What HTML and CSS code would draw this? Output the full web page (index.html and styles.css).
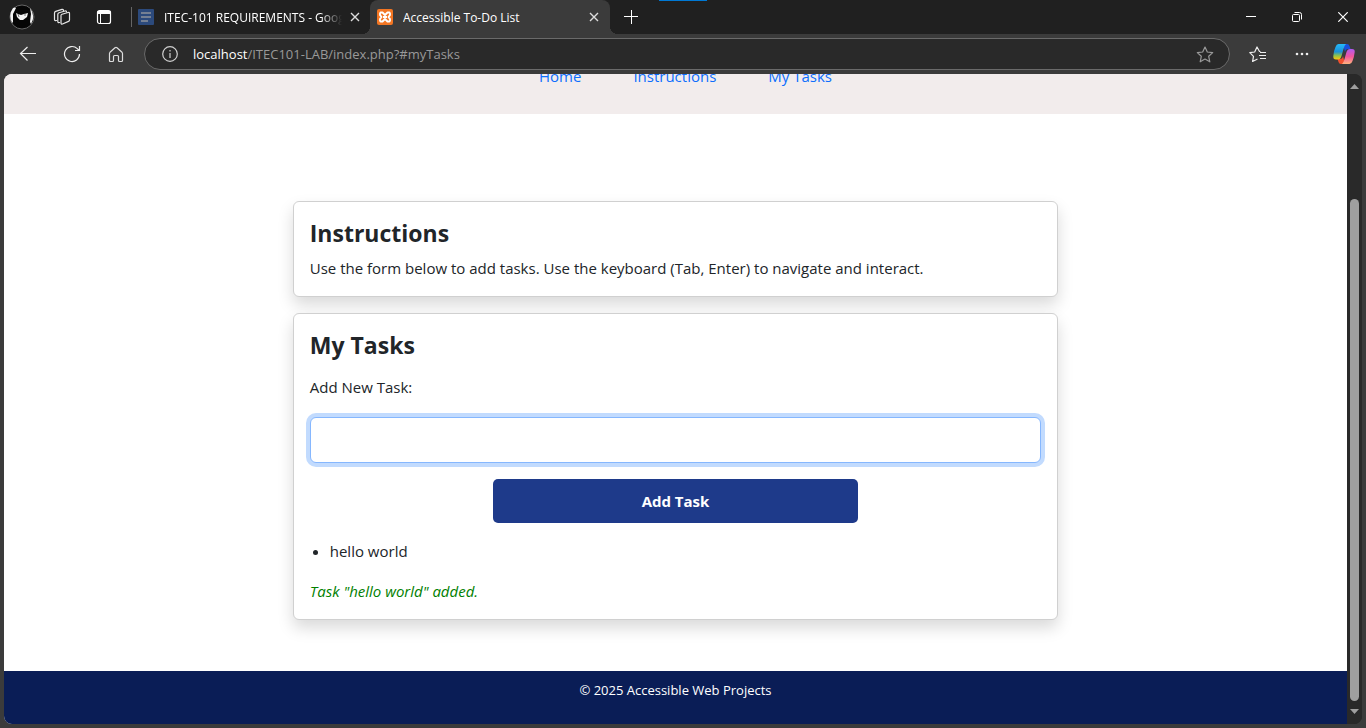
FILE: index.html
```html
<!DOCTYPE html>
<html lang="en">
<head>
<meta charset="utf-8">
<title>Accessible To-Do List</title>
<link rel="stylesheet" href="styles.css">
</head>
<body>
<div class="browser">
  <div class="tabstrip">
    <button class="icon-btn avatar-btn" aria-label="Profile">
      <svg width="26" height="26" viewBox="0 0 26 26"><circle cx="13" cy="13" r="12" fill="#050505" stroke="#666"/><path d="M4 4Q6 3 7 4L4 10 4 18 3 19Q-1 11 4 4ZM21 4Q27 12 22 20L21 18 22 10Z" fill="#f4f4f4"/><path d="M7 9L9 10 12 11 15 10 19 9 18 13 14 16 11 16 8 13Z" fill="#f4f4f4"/><path d="M9 10L10 13M16 9V12" stroke="#444" stroke-width=".7" fill="none"/></svg>
    </button>
    <button class="icon-btn" aria-label="Workspaces">
      <svg width="18" height="18" viewBox="0 0 18 18" fill="none" stroke="#e6e6e6" stroke-width="1.2" stroke-linejoin="round" stroke-linecap="round"><path d="M8 7.5Q8 6.5 9 6.2L15 4.5Q16.5 4.2 16.5 5.5V12Q16.500 13 15.500 13.400L9.500 16Q8 16.500 8 15Z"/><path d="M6.500 14.500Q4.800 15 4.800 13.500V6.500Q4.800 5.200 6 4.800L12 3Q13.400 2.700 13.500 4"/><path d="M3.500 12.500Q1.500 13 1.500 11.500V5Q1.500 3.800 2.700 3.400L9 1.400Q10.300 1.200 10.500 2.500"/></svg>
    </button>
    <button class="icon-btn" aria-label="Tab actions">
      <svg width="16" height="16" viewBox="0 0 16 16" fill="none" stroke="#fff" stroke-width="1.200"><rect x="1.500" y="1.500" width="13" height="13" rx="2"/><path d="M1.500 3.500H14.500" stroke-width="3"/><path d="M4.500 4V14.500" stroke-width="1"/></svg>
    </button>
    <div class="tab tab-first">
      <svg class="favicon" width="16" height="16" viewBox="0 0 16 16"><rect width="16" height="16" rx="1" fill="#2c4a7c"/><path d="M3 4H13M3 8H13M3 12H10" stroke="#8d929a" stroke-width="1.600"/></svg>
      <span class="tab-title tab-title-faded">ITEC-101 REQUIREMENTS - Google Docs</span>
      <button class="tab-close" aria-label="Close tab"><svg width="10" height="10" viewBox="0 0 10 10"><path d="M1 1L9 9M9 1L1 9" stroke="#ddd" stroke-width="1.400"/></svg></button>
    </div>
    <div class="tab tab-active">
      <svg class="favicon" width="16" height="16" viewBox="0 0 16 16"><rect width="16" height="16" rx="2" fill="#f37623"/><path d="M3.500 3.500H5.500L8 6 10.500 3.500H12.500Q13.300 4 13 6L11.500 8 13 10Q13.300 12 12.500 12.500H10.500L8 10 5.500 12.500H3.500Q2.700 12 3 10L4.500 8 3 6Q2.700 4 3.500 3.500ZM6 8H10" fill="none" stroke="#fff" stroke-width="1.900" stroke-linejoin="round"/></svg>
      <span class="tab-title">Accessible To-Do List</span>
      <button class="tab-close" aria-label="Close tab"><svg width="10" height="10" viewBox="0 0 10 10"><path d="M1 1L9 9M9 1L1 9" stroke="#ddd" stroke-width="1.400"/></svg></button>
    </div>
    <button class="icon-btn" aria-label="New tab"><svg width="14" height="14" viewBox="0 0 14 14"><path d="M7.500 0V14M0 6.500H14" stroke="#fff"/></svg></button>
    <div class="window-controls">
      <button aria-label="Minimize"><svg width="10" height="10" viewBox="0 0 10 10"><path d="M0 4.500H10" stroke="#fff"/></svg></button>
      <button aria-label="Restore"><svg width="10" height="10" viewBox="0 0 10 10" fill="none" stroke="#fff"><rect x="0.500" y="2.500" width="7" height="7" rx="1"/><path d="M2.500 .5H7.500Q9.500 .5 9.500 2.500V7.500"/></svg></button>
      <button aria-label="Close"><svg width="10" height="10" viewBox="0 0 10 10"><path d="M.3 .3L9.700 9.700M9.700 .3L.3 9.700" stroke="#fff" stroke-width="1.200"/></svg></button>
    </div>
    <span class="progress-mark"></span>
  </div>

  <div class="toolbar">
    <button class="tool-btn" aria-label="Back"><svg width="18" height="16" viewBox="0 0 18 16" fill="none" stroke="#eee" stroke-width="1.200"><path d="M8.500 1L1.500 7.500 8.500 14.500M1.500 7.500H17"/></svg></button>
    <button class="tool-btn" aria-label="Refresh"><svg width="18" height="18" viewBox="0 0 18 18" fill="none" stroke="#eee" stroke-width="1.200"><path d="M16.500 9A7.500 7.500 0 1 1 14.300 3.700L16 5.400M16.500 1V5.500H12"/></svg></button>
    <button class="tool-btn" aria-label="Home"><svg width="16" height="17" viewBox="0 0 16 17" fill="none" stroke="#ddd" stroke-width="1.200" stroke-linejoin="round"><path d="M1.500 7.500Q1.500 6.800 2 6.300L7 1.700Q8 1 9 1.700L14 6.300Q14.500 6.800 14.500 7.500V14.500Q14.500 15.500 13.500 15.500H11.500Q10.500 15.500 10.500 14.500V10.500Q10.500 9.500 9.500 9.500H6.500Q5.500 9.500 5.500 10.500V14.500Q5.500 15.500 4.500 15.500H2.500Q1.500 15.500 1.500 14.500Z"/></svg></button>
    <div class="address">
      <svg width="16" height="16" viewBox="0 0 16 16" fill="none" stroke="#d0d0d0" stroke-width="1.200"><circle cx="8" cy="8" r="7.300"/><path d="M8 7V12M8 4V5.600"/></svg>
      <a class="url" href="#myTasks"><span class="host">localhost</span>/ITEC101-LAB/index.php?#myTasks</a>
      <svg width="18" height="17" viewBox="0 0 18 17" fill="none" stroke="#999" stroke-width="1.200" stroke-linejoin="round"><path d="M9 1L11.300 6 16.700 6.600 12.700 10.300 13.800 15.800 9 13.100 4.200 15.800 5.300 10.300 1.300 6.600 6.700 6Z"/></svg>
    </div>
    <div class="toolbar-end">
      <button class="tool-btn" aria-label="Favorites"><svg width="18" height="17" viewBox="0 0 18 17" fill="none" stroke="#eee" stroke-width="1.200" stroke-linejoin="round"><path d="M11.500 5.500L10.500 5.500 8 1 5.700 6 .8 6.600 4.500 10.300 3.600 15.500 8.500 13M11 6.500H17M10 9.500H17M11 12.500H17"/></svg></button>
      <button class="tool-btn" aria-label="Settings and more"><svg width="16" height="4" viewBox="0 0 16 4" fill="#eee"><circle cx="3" cy="2" r="1.300"/><circle cx="8" cy="2" r="1.300"/><circle cx="13" cy="2" r="1.300"/></svg></button>
      <button class="tool-btn copilot" aria-label="Copilot"><svg width="22" height="20" viewBox="0 0 22 20">
        <defs><linearGradient id="l" x2="0" y2="1"><stop stop-color="#25bafa"/><stop offset=".5" stop-color="#1b91d8"/><stop offset=".75" stop-color="#8fc34b"/><stop offset="1" stop-color="#ffc70a"/></linearGradient><linearGradient id="r" x2="0" y2="1"><stop stop-color="#b05af0"/><stop offset=".5" stop-color="#f2559e"/><stop offset="1" stop-color="#ffb27c"/></linearGradient></defs>
        <path d="M10 0H14Q16 0 16.500 2L17.500 5H15Q12.500 5 12 8Z" fill="#1a4fdb"/><path d="M12 20H8Q6 20 5.500 18L4.500 15H7Q9.500 15 10 12Z" fill="#f0502e"/>
        <path d="M5.500 0H13Q11.500 1 10.500 5L8.500 12Q7.500 15.500 5 15.500H3Q0 15.500 .3 12Q1 6 2.500 3Q3.500 0 5.500 0Z" fill="url(#l)"/><path d="M16.500 20H9Q10.500 19 11.500 15L13.500 8Q14.500 5 17 5H19Q22 5 21.700 8Q21 14 19.500 17Q18.500 20 16.500 20Z" fill="url(#r)"/></svg></button>
    </div>
  </div>

  <div class="viewport">
    <div class="page">
      <header class="site-header">
        <nav class="site-nav"><a href="#home">Home</a><a href="#instructions">Instructions</a><a href="#myTasks">My Tasks</a></nav>
      </header>
      <main class="content">
        <section class="card" id="instructions">
          <h2>Instructions</h2>
          <p>Use the form below to add tasks. Use the keyboard (Tab, Enter) to navigate and interact.</p>
        </section>
        <section class="card" id="myTasks">
          <h2>My Tasks</h2>
          <form class="task-form">
            <label for="task">Add New Task:</label>
            <input class="task-input" id="task" type="text">
            <button class="add-btn" type="button">Add Task</button>
          </form>
          <ul class="task-list"><li>hello world</li></ul>
          <p class="status" role="status">Task "hello world" added.</p>
        </section>
      </main>
      <footer class="site-footer">© 2025 Accessible Web Projects</footer>
    </div>
    <div class="scrollbar">
      <svg width="9" height="5" viewBox="0 0 9 5"><path d="M0 5L4.500 0 9 5Z" fill="#9f9f9f"/></svg>
      <span class="thumb"></span>
      <svg width="9" height="5" viewBox="0 0 9 5"><path d="M0 0L4.500 5 9 0Z" fill="#9f9f9f"/></svg>
    </div>
  </div>
</div>
</body>
</html>
```
FILE: styles.css
```css
* { box-sizing: border-box; }
body { margin: 0; font-family: "Open Sans", "Noto Sans", sans-serif; color: #212529; }
button { border: 0; padding: 0; background: none; font: inherit; color: inherit; display: flex; align-items: center; justify-content: center; }
svg { flex: none; display: block; }

.browser { height: 100vh; display: flex; flex-direction: column; background: #3b3b3b; }

/* Tab strip */
.tabstrip { position: relative; height: 34px; flex: none; display: flex; background: #202020; color: #fff; font-size: 12px; }
.icon-btn { width: 42px; height: 34px; }
.avatar-btn { width: 41px; padding-left: 3px; }
.tab { position: relative; display: flex; align-items: center; width: 240px; padding: 0 11px 0 7px; }
.tab-first { width: 239px; padding-left: 7px; margin-left: 6px; padding-right: 10px; }
.tab-first::before { content: ""; position: absolute; left: 0; top: 7px; width: 1px; height: 20px; background: #666; }
.tab-active { background: #3b3b3b; border-radius: 8px 8px 0 0; }
.tab-active::before, .tab-active::after { content: ""; position: absolute; bottom: 0; width: 8px; height: 8px; }
.tab-active::before { left: -8px; background: radial-gradient(circle at 0 0, transparent 8px, #3b3b3b 8px); }
.tab-active::after { right: -8px; background: radial-gradient(circle at 100% 0, transparent 8px, #3b3b3b 8px); }
.tab-title { flex: 1; min-width: 0; margin: 0 8px 0 10px; overflow: hidden; white-space: nowrap; }
.tab-title-faded { -webkit-mask-image: linear-gradient(to right, #000 88%, transparent); mask-image: linear-gradient(to right, #000 88%, transparent); }
.window-controls { margin-left: auto; display: flex; }
.window-controls button { width: 46px; }
.progress-mark { position: absolute; top: 0; left: 659px; width: 48px; height: 1px; background: #0078d4; }

/* Toolbar */
.toolbar { height: 40px; flex: none; display: flex; align-items: center; padding-left: 6px; }
.tool-btn { width: 44px; height: 32px; }
.address { flex: 1; height: 32px; margin-left: 6px; display: flex; align-items: center; padding: 0 15px 0 17px; border: 1px solid #6a6a6a; border-radius: 16px; background: #292929; }
.url { flex: 1; margin-left: 15px; font-size: 13px; color: #999; text-decoration: none; white-space: nowrap; }
.host { color: #fff; }
.toolbar-end { display: flex; padding-left: 6px; }
.copilot { width: 40px; margin-right: 2px; }

/* Page area */
.viewport { flex: 1; min-height: 0; margin: 0 4px 4px; display: flex; border-radius: 8px; overflow: hidden; background: #292929; }
.page { flex: 1; min-width: 0; display: flex; flex-direction: column; background: #fff; overflow: hidden; font-size: 15px; line-height: 24px; }
.site-header { height: 40px; flex: none; display: flex; align-items: flex-end; justify-content: center; padding: 0 0 26px; background: #f2ecec; }
.site-nav { display: flex; gap: 52px; padding-left: 20px; }
.site-nav a { color: #0d6efd; text-decoration: none; }
.content { flex: 1; width: 57%; margin: 0 auto; padding-top: 87px; display: flex; flex-direction: column; gap: 16px; }
.card { padding: 16px; background: #fff; border: 1px solid #d0d0d0; border-radius: 6px; box-shadow: 0 8px 16px rgba(0, 0, 0, .15); }
.card h2 { margin: 0 0 8px; font-size: 23px; line-height: 30px; font-weight: 700; }
.card p { margin: 0; }
.task-form { display: flex; flex-direction: column; padding-top: 7px; }
.task-input { width: 100%; height: 46px; margin: 18px 0 16px; padding: 8px 12px; border: 1px solid #86b7fe; border-radius: 6px; background: #fff; box-shadow: 0 0 0 4px #c2dbfe; font: inherit; outline: 0; }
.add-btn { width: 50%; height: 44px; align-self: center; border-radius: 5px; background: #1e3a8a; color: #fff; font-weight: 700; }
.task-list { margin: 16px 0; padding-left: 20px; }
.card .status { font-style: italic; color: #008000; }
.site-footer { height: 53px; flex: none; padding-top: 7px; text-align: center; background: #0a1d56; color: #fff; font-size: 13px; }

.scrollbar { width: 15px; flex: none; display: flex; flex-direction: column; align-items: center; padding: 10px 0; background: #292929; }
.thumb { width: 9px; flex: 1; margin: 110px 0 8px; border-radius: 5px; background: #9f9f9f; }
```
